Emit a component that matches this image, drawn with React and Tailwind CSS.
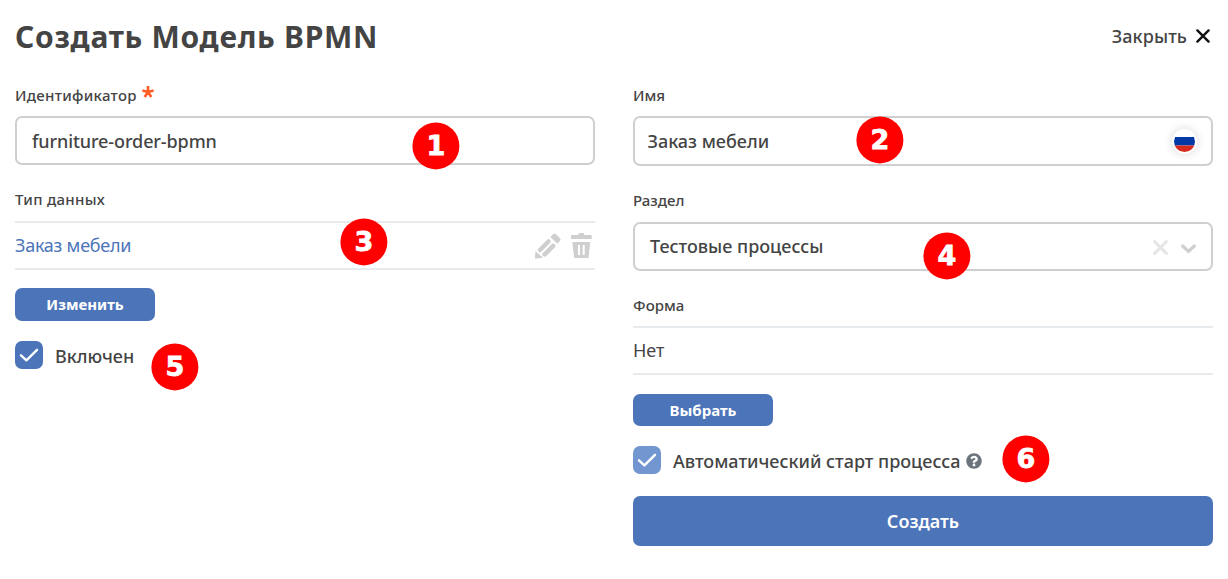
import React from "react";

function Badge({ n, className }) {
  return (
    <span
      className={
        "absolute z-10 flex h-[47px] w-[47px] translate-x-[0.4px] translate-y-[0.4px] items-center justify-center rounded-full bg-[#ff0000] font-['DejaVu_Sans','Noto_Sans',sans-serif] text-[27px] font-bold leading-none text-white [-webkit-text-stroke:0.8px_white] " +
        className
      }
    >
      {n}
    </span>
  );
}

function Label({ children, required, className = "" }) {
  return (
    <div className={"flex h-5 items-center text-[15px] font-medium leading-5 " + className}>
      <span className="-mt-0.5">{children}</span>
      {required && (
        <svg viewBox="0 0 12 12" className="mb-2 ml-[5px] h-3 w-3 text-[#ff5c26]" fill="none" stroke="currentColor" strokeWidth="2.6">
          <path d="M6 6V0M6 6L0.4 4.5M6 6L11.6 4.5M6 6L2.7 11M6 6L9.3 11" />
        </svg>
      )}
    </div>
  );
}

function Checkbox({ children, muted, className = "" }) {
  return (
    <div className={"flex h-7 items-center " + className}>
      <span className={"flex h-7 w-7 items-center justify-center rounded-[7px] " + (muted ? "bg-[#7296cf]" : "bg-[#4b74b9]")}>
        <svg viewBox="0 0 28 28" className="h-7 w-7" fill="none" stroke="#fff" strokeWidth="2.4" strokeLinecap="round" strokeLinejoin="round">
          <path d="M6 14.3L11.4 19.3L22 8.8" />
        </svg>
      </span>
      {children}
    </div>
  );
}

function Button({ children, className }) {
  return (
    <button className={"flex items-center justify-center rounded-[7px] bg-[#4b74b9] text-white " + className}>
      {children}
    </button>
  );
}

export default function App() {
  return (
    <div className="h-[579px] w-[1228px] overflow-hidden bg-white px-[15px] font-['Noto_Sans','Open_Sans',sans-serif] text-[#444]">
      <header className="flex h-[86px] items-start justify-between">
        <h1 className="mt-[17px] text-[30px] font-bold leading-10 tracking-[0.72px]">Создать Модель BPMN</h1>
        <button className="mt-6 flex items-center text-[18px] font-medium leading-6 tracking-[0.1px]">
          Закрыть
          <svg viewBox="0 0 14 14" className="ml-[9px] mr-[3px] h-3.5 w-3.5" fill="none" stroke="#111" strokeWidth="2.4" strokeLinecap="round">
            <path d="M1.4 1.4L12.6 12.6M12.6 1.4L1.4 12.6" />
          </svg>
        </button>
      </header>

      <main className="flex gap-[38px]">
        <section className="w-[580px]">
          <Label required className="tracking-[0.3px]">Идентификатор</Label>
          <div className="relative mt-2.5 flex h-[49px] items-center rounded-[7px] border-2 border-[#cfcfcf] pl-[15px] pt-px text-[18px] font-medium tracking-[-0.1px]">
            furniture-order-bpmn
            <Badge n="1" className="left-[395px] top-[4px]" />
          </div>
          <Label className="mt-[25px] tracking-[0.3px]">Тип данных</Label>
          <div className="relative mt-[11px] flex h-[49px] items-center justify-between border-y-2 border-[#e7ebee] text-[18px] tracking-[-0.25px] text-[#4b74b9]">
            Заказ мебели
            <Badge n="3" className="left-[325px] top-[-5px]" />
            <div className="flex items-center gap-[9px] pr-[3px] text-[#cfcfcf]">
              <svg viewBox="0 0 27 26" className="h-[26px] w-[27px]" fill="currentColor">
                <path d="M15.4 4L18.3 1.1Q19.5 0 20.7 1.1L25.1 5.5Q26.2 6.6 25.1 7.8L22.3 10.7Z" />
                <path d="M0.6 25.6Q0 25.6 0 25L0.4 18.2Q1.8 18.4 2.2 20.2Q4.5 20.3 4.8 22.4Q6.7 22.4 7.6 24.6Q5 25.6 0.6 25.6Z" />
                <path d="M5.1 17L13.5 8.5M9.7 21.4L18.2 12.9" stroke="currentColor" strokeWidth="4.5" strokeLinecap="round" />
              </svg>
              <svg viewBox="0 0 21 25" className="h-[25px] w-[21px]" fill="currentColor">
                <path d="M0 2.5Q0 2 0.5 2H7.5V1Q7.5 0 8.5 0H12Q13 0 13 1V2H20Q20.7 2 20.7 2.5V6H0Z" />
                <path fillRule="evenodd" d="M1.3 9H19.2L17.5 25H3.2ZM7 12V22H9V12ZM11.7 12V22H13.7V12Z" />
              </svg>
            </div>
          </div>
          <Button className="mt-[18px] h-[33px] w-[140px] text-[15px] font-bold">Изменить</Button>
          <div className="relative mt-5">
            <Checkbox>
              <span className="ml-3 pt-0.5 text-[18px] font-medium">Включен</span>
            </Checkbox>
            <Badge n="5" className="left-[136px] top-[2px]" />
          </div>
        </section>

        <section className="w-[580px]">
          <Label>Имя</Label>
          <div className="relative mt-2.5 flex h-[50px] items-center justify-between rounded-[7px] border-2 border-[#cfcfcf] pl-[13px] pr-[14px] text-[18px] font-medium">
            <span className="-ml-[0.5px]">Заказ мебели</span>
            <Badge n="2" className="left-[221px] top-[-2px]" />
            <span className="flex h-[25px] w-[25px] items-center justify-center rounded-full bg-white shadow-[0_0_10px_rgba(0,0,0,0.16)]">
              <svg viewBox="0 0 21 21" className="h-[21px] w-[21px]">
                <clipPath id="flag"><circle cx="10.5" cy="10.5" r="10.5" /></clipPath>
                <g clipPath="url(#flag)">
                  <path fill="#fff" d="M0 0H21V6H0Z" />
                  <path fill="#0039a6" d="M0 6H21V14.5H0Z" />
                  <path fill="#d52b1e" d="M0 14.5H21V21H0Z" />
                </g>
              </svg>
            </span>
          </div>
          <Label className="mt-[25px]">Раздел</Label>
          <div className="relative mt-[11px] flex h-[49px] items-center justify-between rounded-[7px] border-2 border-[#cfcfcf] pl-[15px] pr-[15px] text-[18px] font-medium">
            Тестовые процессы
            <Badge n="4" className="left-[288px] top-[8px]" />
            <div className="flex items-center gap-[13px]">
              <svg viewBox="0 0 15 15" className="mt-0.5 h-[15px] w-[15px]" fill="none" stroke="#e6e6e6" strokeWidth="3" strokeLinecap="round">
                <path d="M1.6 1.6L13.4 13.4M13.4 1.6L1.6 13.4" />
              </svg>
              <svg viewBox="0 0 15 10" className="mt-1 h-2.5 w-[15px]" fill="none" stroke="#cfcfcf" strokeWidth="3.2" strokeLinecap="round">
                <path d="M1.7 2L7.5 7.4L13.3 2" />
              </svg>
            </div>
          </div>
          <Label className="mt-[25px]">Форма</Label>
          <div className="mt-2.5 flex h-[49px] items-center border-y-2 border-[#e7ebee] text-[18px]">Нет</div>
          <Button className="mt-[19px] h-8 w-[140px] text-[15px] font-bold">Выбрать</Button>
          <div className="relative mt-5">
            <Checkbox muted>
              <span className="ml-3 pt-0.5 text-[18px] font-medium">Автоматический старт процесса</span>
              <svg viewBox="0 0 512 512" className="ml-[5px] mt-0.5 h-4 w-4" fill="#6c757d">
                <path d="M504 256c0 136.997-111.043 248-248 248S8 392.997 8 256C8 119.083 119.043 8 256 8s248 111.083 248 248zM262.655 90c-54.497 0-89.255 22.957-116.549 63.758-3.536 5.286-2.353 12.415 2.715 16.258l34.699 26.31c5.205 3.947 12.621 3.008 16.665-2.122 17.864-22.658 30.113-35.797 57.303-35.797 20.429 0 45.698 13.148 45.698 32.958 0 14.976-12.363 22.667-32.534 33.976C247.128 238.528 216 254.941 216 296v4c0 6.627 5.373 12 12 12h56c6.627 0 12-5.373 12-12v-1.333c0-28.462 83.186-29.647 83.186-106.667 0-58.002-60.165-102-116.531-102zM256 338c-25.365 0-46 20.635-46 46 0 25.364 20.635 46 46 46s46-20.636 46-46c0-25.365-20.635-46-46-46z" />
              </svg>
            </Checkbox>
            <Badge n="6" className="left-[369px] top-[-11px]" />
          </div>
          <Button className="mt-[22px] h-[50px] w-full text-[18px] font-semibold">Создать</Button>
        </section>
      </main>
    </div>
  );
}
